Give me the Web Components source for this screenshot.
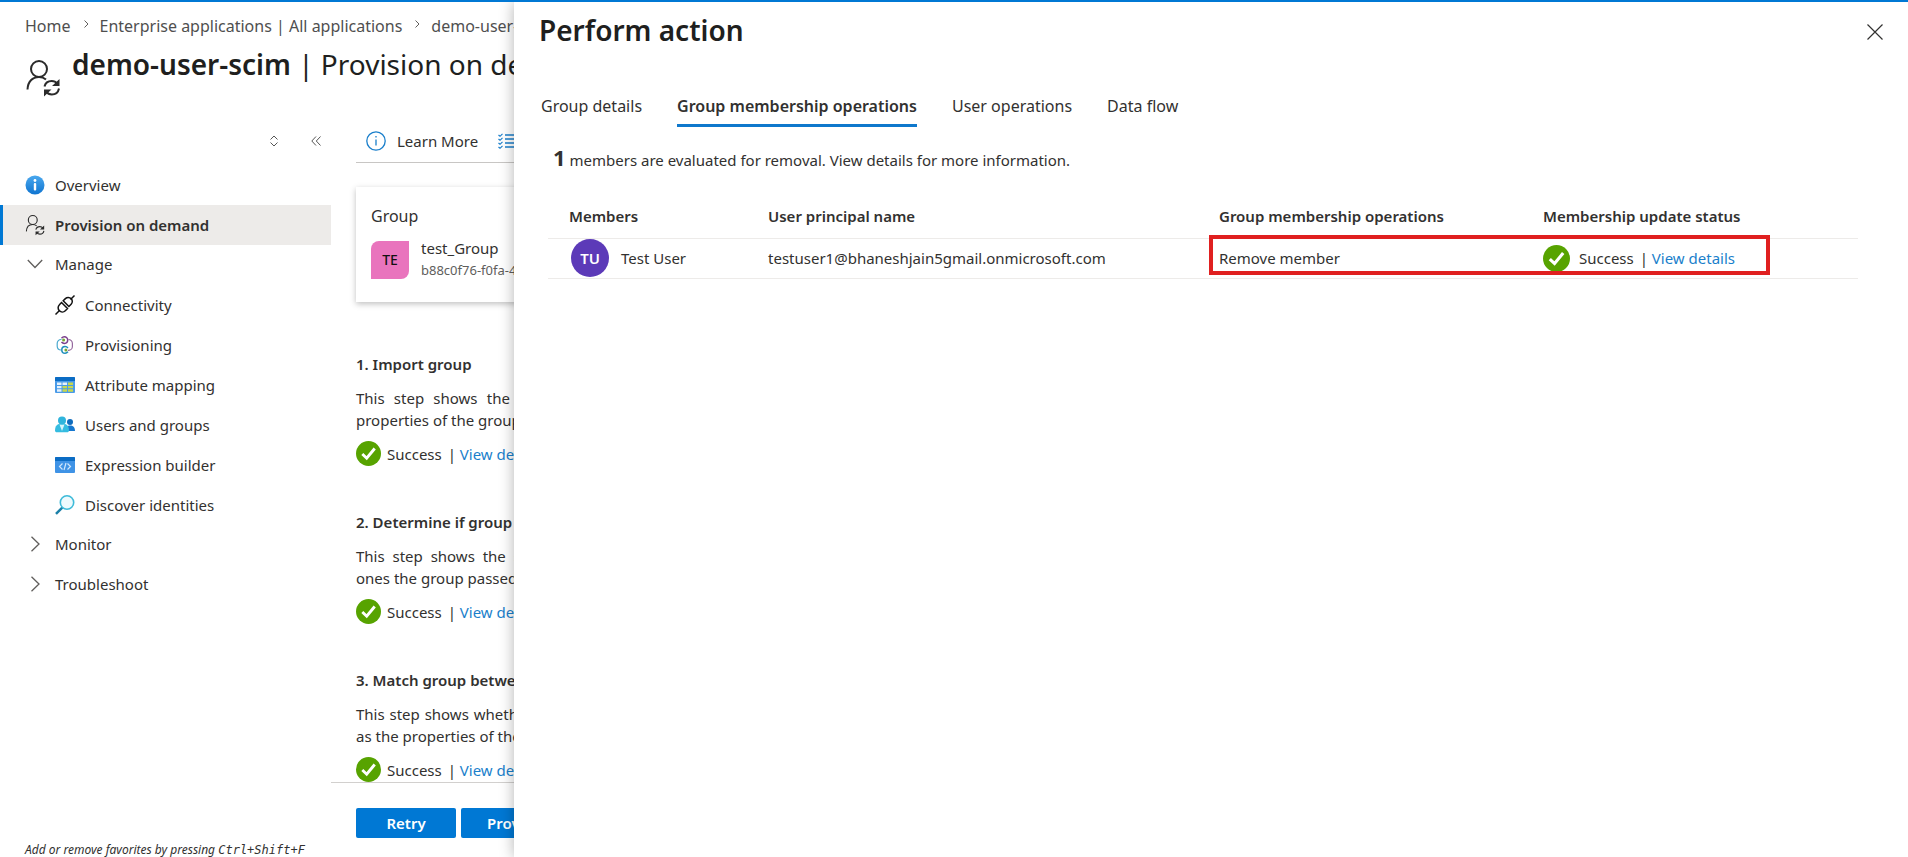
<!DOCTYPE html>
<html lang="en">
<head>
<meta charset="utf-8">
<title>Perform action</title>
<style>
    html, body {
        height: 100%;
        margin: 0;
    }

    body {
        font-family: "Noto Sans", "Open Sans", sans-serif;
        font-size: 15px;
        line-height: 22px;
        color: #323130;
        background: #fff;
        overflow: hidden;
    }
</style>
</head>
<body>
<portal-app></portal-app>

<script>
const ICONS = {
    person: `<svg viewBox="0 0 34 36" fill="none" stroke="#2b2b2b" stroke-width="2">
        <circle cx="13" cy="9" r="8"/>
        <path d="M1.500 29.500c.3-8 5-12.500 11.500-12.500 3 0 5 .8 7 2.500"/>
        <path d="M18.500 26.500c.8-3.500 3.800-5.500 7.200-5.500 2.400 0 4.300 1 5.500 2.600M33 28.500c-.8 3.800-3.800 6-7.200 6-2.400 0-4.300-1-5.600-2.800"/>
        <path d="M33.500 19v7h-7.500zM18 36.500v-7h7.500z" fill="#2b2b2b" stroke="none"/></svg>`,
    info: `<svg viewBox="0 0 20 20"><defs><linearGradient id="g" x1="0" y1="0" x2="0" y2="1"><stop offset="0" stop-color="#4aa8ee"/><stop offset="1" stop-color="#0f74d0"/></linearGradient></defs>
        <circle cx="10" cy="10" r="9.500" fill="url(#g)"/><circle cx="10" cy="5.500" r="1.400" fill="#fff"/><rect x="8.800" y="8" width="2.400" height="7.500" rx="1" fill="#fff"/></svg>`,
    infoLine: `<svg viewBox="0 0 20 20" fill="none" stroke="#1a7fcb" stroke-width="1.300"><circle cx="10" cy="10" r="9.200"/><path d="M10 8.500v6"/><path d="M10 5v1.600"/></svg>`,
    checklist: `<svg viewBox="0 0 20 16" fill="none" stroke="#1a7fcb" stroke-width="1.200"><path d="M7 2h13M7 6h13M7 10h13M7 14h13" stroke-width="1.600"/><path d="M.5 2l1.500 1.300L4.500.8M.5 6l1.500 1.300L4.500 4.800M.5 10l1.500 1.300L4.500 8.800M.5 14l1.500 1.300 2.500-2.500"/></svg>`,
    chevronDown: `<svg viewBox="0 0 16 16" fill="none" stroke="#605e5c" stroke-width="1.300"><path d="M.8 4l7.200 7.500L15.200 4"/></svg>`,
    chevronRight: `<svg viewBox="0 0 16 16" fill="none" stroke="#605e5c" stroke-width="1.300"><path d="M4.500.8L12 8l-7.500 7.200"/></svg>`,
    crumb: `<svg viewBox="0 0 8 8" fill="none" stroke="#605e5c"><path d="M2.500.5L6 4 2.500 7.500"/></svg>`,
    collapse: `<svg viewBox="0 0 10 10" fill="none" stroke="#555"><path d="M5 .5L.8 5 5 9.500M9.500.5L5.300 5l4.200 4.500"/></svg>`,
    sort: `<svg viewBox="0 0 10 12" fill="none" stroke="#555"><path d="M1.500 4.500L5 1l3.500 3.500M1.500 7.500L5 11l3.500-3.500"/></svg>`,
    plug: `<svg viewBox="0 0 20 20" fill="none" stroke="#111" stroke-width="1.500"><path d="M.5 19.500l4-4M15.500 4.500l4-4"/><path d="M6.500 7.500l6 6-2.200 2.200c-1.700 1.700-4.300 1.700-5.900.1-1.700-1.700-1.700-4.300 0-6zM8.200 5.800l2.200-2.200c1.700-1.700 4.200-1.500 5.700 0s1.700 4 0 5.700l-2.200 2.200z"/></svg>`,
    cycle: `<svg viewBox="0 0 20 20" fill="none" stroke-width="1.200"><path d="M6.500 4.500H6A3.800 3.800 0 0 0 2.200 8.300v3A3.800 3.800 0 0 0 6 15" stroke="#4aa9cf"/><path d="M13.500 4.500a3.900 3.900 0 0 1 3.900 3.900v3a3.900 3.900 0 0 1-3.900 3.900H13" stroke="#96699f"/><path d="M6.500 3.200C7.300 2.300 8.200 1.800 9.400 1.800a3.300 3.300 0 0 1 0 6.600c-1.200 0-2.100-.4-2.900-1.300" stroke="#7a3f8c" stroke-width="1.500"/><path d="M13 12.900c-.8-.9-1.700-1.300-2.900-1.300a3.300 3.300 0 0 0 0 6.600c1.200 0 2.100-.5 2.900-1.400" stroke="#1f8fbc" stroke-width="1.500"/><circle cx="8.600" cy="5.100" r="1.500" fill="#78a832"/><circle cx="10.900" cy="14.900" r="1.500" fill="#78a832"/></svg>`,
    table: `<svg viewBox="0 0 20 20"><rect y="2" width="20" height="16" rx="1" fill="#4a9be8"/><path d="M0 3a1 1 0 0 1 1-1h18a1 1 0 0 1 1 1v3H0z" fill="#0b6cc4"/><g fill="#e6f2fc"><path d="M2 7.500h4.500v2.400H2zM2 10.900h4.500v2.400H2zM2 14.300h4.500v2.400H2zM7.500 7.500H12v2.400H7.500z"/></g><path d="M13 7.500h5v2.400h-5zM7.500 10.900H12v2.400H7.500zM13 10.900h5v2.400h-5zM7.500 14.300H12v2.400H7.500zM13 14.300h5v2.400h-5z" fill="#c8d84c"/></svg>`,
    users: `<svg viewBox="0 0 20 20"><circle cx="15" cy="7" r="3" fill="#0f6cbd"/><path d="M10.500 15.500c0-3.500 2-5 4.700-5s4.800 1.700 4.800 5.500H11z" fill="#1577cf"/><path d="M0 15.500C0 11 2.300 8.500 7 8.500s7 2.500 7 7c0 1-.8 1.800-1.800 1.800H1.800C.8 17.300 0 16.500 0 15.500z" fill="#35bce0"/><path d="M4.500 9.500L7 16l2.500-6.500z" fill="#d6f4fb"/><circle cx="7" cy="5.500" r="4" fill="#2fb4dc"/></svg>`,
    code: `<svg viewBox="0 0 20 20"><rect y="2" width="20" height="16" rx="1" fill="#3f93e6"/><path d="M0 3a1 1 0 0 1 1-1h18a1 1 0 0 1 1 1v3H0z" fill="#0b6cc4"/><path d="M7.500 8.500L4.500 11.500l3 3M12.500 8.500l3 3-3 3M11 8l-2 7" fill="none" stroke="#cfe6fb" stroke-width="1.200"/></svg>`,
    search: `<svg viewBox="0 0 20 20" fill="none"><path d="M1 18.800l6.500-6.500" stroke="#1b7fa8" stroke-width="2.400"/><circle cx="12" cy="7.500" r="6.700" fill="#eefafd" stroke="#3fbbd9" stroke-width="1.600"/></svg>`,
    check: `<svg viewBox="0 0 25 25"><circle cx="12.500" cy="12.500" r="12.500" fill="#57a300"/><path d="M6.300 13l4.400 4.200 8-9.700" fill="none" stroke="#fff" stroke-width="2.900"/></svg>`,
    close: `<svg viewBox="0 0 16 16" fill="none" stroke="#323130" stroke-width="1.200"><path d="M.5.5l15 15M15.500.5l-15 15"/></svg>`
};

class PortalIcon extends HTMLElement {
    connectedCallback() {
        this.attachShadow({ mode: 'open' });
        this.shadowRoot.innerHTML = `
            <style>
                :host { display: block; flex: none; width: 20px; height: 20px; }
                svg { display: block; width: 100%; height: 100%; overflow: visible; }
            </style>
            ${ICONS[this.getAttribute('name')]}
        `;
    }
}

class PageHeader extends HTMLElement {
    connectedCallback() {
        this.attachShadow({ mode: 'open' });
        this.shadowRoot.innerHTML = `
            <style>
                :host { display: block; padding: 12px 0 0 25px; white-space: nowrap; }
                nav { display: flex; align-items: center; height: 24px; font-size: 16px; }
                nav a { color: #4f4f4f; text-decoration: none; }
                nav portal-icon { width: 8px; height: 8px; margin: 0 10px 4px 11px; }
                .title { display: flex; gap: 12px; padding: 6px 0 0 1px; }
                .title portal-icon { width: 34px; height: 36px; margin-top: 16px; }
                h1 { margin: 0; font-size: 28px; line-height: 40px; font-weight: 400; color: #201f1e; }
                b { font-weight: 600; }
            </style>
            <nav aria-label="Breadcrumb">
                <a href="#">Home</a><portal-icon name="crumb"></portal-icon>
                <a href="#">Enterprise applications | All applications</a><portal-icon name="crumb"></portal-icon>
                <a href="#">demo-user-scim</a>
            </nav>
            <div class="title">
                <portal-icon name="person"></portal-icon>
                <h1><b>demo-user-scim</b> | Provision on demand</h1>
            </div>
        `;
    }
}

class NavItem extends HTMLElement {
    connectedCallback() {
        this.attachShadow({ mode: 'open' });
        this.shadowRoot.innerHTML = `
            <style>
                :host { display: block; }
                a {
                    display: flex;
                    align-items: center;
                    gap: 10px;
                    height: 40px;
                    padding-left: 25px;
                    color: inherit;
                    text-decoration: none;
                }
                :host([group]) a { height: 38px; padding-bottom: 2px; }
                :host([group]) portal-icon { width: 16px; height: 16px; margin: 0 2px; }
                :host([child]) a { padding-left: 55px; }
                :host([selected]) a {
                    padding-left: 22px;
                    border-left: 3px solid #0078d4;
                    background: #edebe9;
                    font-weight: 600;
                }
            </style>
            <a href="#"><portal-icon name="${this.getAttribute('icon')}"></portal-icon><slot></slot></a>
        `;
    }
}

class SideNav extends HTMLElement {
    connectedCallback() {
        this.attachShadow({ mode: 'open' });
        this.shadowRoot.innerHTML = `
            <style>
                :host { display: flex; flex-direction: column; min-height: 0; }
                .tools {
                    display: flex;
                    justify-content: flex-end;
                    align-items: center;
                    gap: 32px;
                    height: 24px;
                    padding-right: 10px;
                    margin: 31px 0 12px;
                }
                button { padding: 0; border: 0; background: none; }
                .tools portal-icon { width: 10px; height: 12px; }
                nav { flex: 1; }
                footer {
                    padding-left: 25px;
                    font-size: 12px;
                    line-height: 14px;
                    font-style: italic;
                    white-space: nowrap;
                }
                kbd { font-family: "DejaVu Sans Mono", monospace; font-size: 12px; }
            </style>
            <div class="tools">
                <button aria-label="Expand all"><portal-icon name="sort"></portal-icon></button>
                <button aria-label="Collapse menu"><portal-icon name="collapse"></portal-icon></button>
            </div>
            <nav aria-label="Application">
                <nav-item icon="info">Overview</nav-item>
                <nav-item icon="person" selected>Provision on demand</nav-item>
                <nav-item icon="chevronDown" group>Manage</nav-item>
                <nav-item icon="plug" child>Connectivity</nav-item>
                <nav-item icon="cycle" child>Provisioning</nav-item>
                <nav-item icon="table" child>Attribute mapping</nav-item>
                <nav-item icon="users" child>Users and groups</nav-item>
                <nav-item icon="code" child>Expression builder</nav-item>
                <nav-item icon="search" child>Discover identities</nav-item>
                <nav-item icon="chevronRight" group>Monitor</nav-item>
                <nav-item icon="chevronRight" group>Troubleshoot</nav-item>
            </nav>
            <footer>Add or remove favorites by pressing <kbd>Ctrl+Shift+F</kbd></footer>
        `;
    }
}

class StatusLine extends HTMLElement {
    connectedCallback() {
        this.attachShadow({ mode: 'open' });
        this.shadowRoot.innerHTML = `
            <style>
                :host { display: flex; align-items: center; gap: 6px; white-space: nowrap; }
                :host([large]) { gap: 9px; }
                portal-icon { width: 25px; height: 25px; }
                :host([large]) portal-icon { width: 27px; height: 27px; }
                .sep { padding-left: 2px; }
                a { color: #1a7fcb; text-decoration: none; }
            </style>
            <portal-icon name="check"></portal-icon>
            <span><slot></slot> <span class="sep">|</span> <a href="#">View details</a></span>
        `;
    }
}

class ProvisionStep extends HTMLElement {
    connectedCallback() {
        this.attachShadow({ mode: 'open' });
        this.shadowRoot.innerHTML = `
            <style>
                :host { display: block; width: 290px; height: 158px; }
                h2 {
                    margin: 0 0 12px;
                    font-size: 15px;
                    line-height: 22px;
                    font-weight: 600;
                    white-space: nowrap;
                }
                p { margin: 0 0 10px; text-align: justify; }
            </style>
            <h2>${this.getAttribute('heading')}</h2>
            <p><slot></slot></p>
            <status-line>Success</status-line>
        `;
    }
}

class GroupCard extends HTMLElement {
    connectedCallback() {
        this.attachShadow({ mode: 'open' });
        this.shadowRoot.innerHTML = `
            <style>
                :host {
                    display: block;
                    box-sizing: border-box;
                    width: 380px;
                    height: 115px;
                    padding: 17px 15px;
                    box-shadow: 0 2px 6px rgba(0, 0, 0, .25);
                }
                h2 { margin: 0; font-size: 16px; line-height: 24px; font-weight: 400; }
                .row { display: flex; gap: 12px; margin-top: 9px; }
                .avatar {
                    width: 38px;
                    height: 38px;
                    border-radius: 8px 0;
                    background: #e974bd;
                    color: #111;
                    font-weight: 500;
                    font-size: 14px;
                    line-height: 38px;
                    text-align: center;
                    margin-top: 4px;
                }
                small { display: block; font-size: 13px; color: #605e5c; }
            </style>
            <h2>Group</h2>
            <div class="row">
                <div class="avatar">TE</div>
                <div>test_Group<small>b88c0f76-f0fa-4c1e</small></div>
            </div>
        `;
    }
}

class ProvisionView extends HTMLElement {
    connectedCallback() {
        this.attachShadow({ mode: 'open' });
        this.shadowRoot.innerHTML = `
            <style>
                :host { display: flex; flex-direction: column; min-height: 0; }
                .commands {
                    display: flex;
                    align-items: center;
                    gap: 20px;
                    height: 42px;
                    margin: 22px 0 0 25px;
                    border-bottom: 1px solid #c8c6c4;
                }
                button { font: inherit; color: inherit; border: 0; background: none; padding: 0; }
                .commands button { display: flex; align-items: center; gap: 11px; }
                .commands button:first-child { padding-left: 10px; }
                .body { flex: 1; min-height: 0; overflow: hidden; padding: 24px 0 0 25px; }
                .steps { margin-top: 51px; }
                .actions {
                    display: flex;
                    gap: 5px;
                    height: 49px;
                    padding: 25px 0 0 25px;
                    border-top: 1px solid #d2d0ce;
                }
                .actions button {
                    min-width: 100px;
                    height: 30px;
                    padding: 0 26px;
                    border-radius: 2px;
                    background: #0078d4;
                    color: #fff;
                    font-weight: 600;
                }
            </style>
            <div class="commands">
                <button><portal-icon name="infoLine"></portal-icon>Learn More</button>
                <button aria-label="Steps"><portal-icon name="checklist"></portal-icon></button>
            </div>
            <div class="body">
                <group-card></group-card>
                <div class="steps">
                    <provision-step heading="1. Import group">This step shows the retrieved objects, properties of the group</provision-step>
                    <provision-step heading="2. Determine if group is in scope">This step shows the scopes and which ones the group passed</provision-step>
                    <provision-step heading="3. Match group between source and target">This step shows whether the group is in, as the properties of the match</provision-step>
                </div>
            </div>
            <div class="actions">
                <button>Retry</button>
                <button>Provision another object</button>
            </div>
        `;
    }
}

class TabList extends HTMLElement {
    connectedCallback() {
        this.attachShadow({ mode: 'open' });
        this.shadowRoot.innerHTML = `
            <style>
                :host { display: flex; gap: 35px; }
                button {
                    height: 44px;
                    padding: 4px 0 0;
                    border: 0;
                    border-bottom: 3px solid transparent;
                    background: none;
                    color: inherit;
                    font: inherit;
                    font-size: 16px;
                }
                button[aria-selected="true"] { font-weight: 600; border-color: #0f78cc; }
            </style>
            <button role="tab" aria-selected="false">Group details</button>
            <button role="tab" aria-selected="true">Group membership operations</button>
            <button role="tab" aria-selected="false">User operations</button>
            <button role="tab" aria-selected="false">Data flow</button>
        `;
    }
}

class MemberTable extends HTMLElement {
    connectedCallback() {
        this.attachShadow({ mode: 'open' });
        this.shadowRoot.innerHTML = `
            <style>
                :host { display: block; }
                table { width: 100%; table-layout: fixed; border-collapse: collapse; }
                .c1 { width: 210px; }
                .c2 { width: 451px; }
                .c3 { width: 324px; }
                th, td {
                    box-sizing: border-box;
                    height: 40px;
                    padding: 0 0 0 10px;
                    border-bottom: 1px solid #edebe9;
                    text-align: left;
                    white-space: nowrap;
                }
                th { height: 44px; font-weight: 600; }
                th:first-child, td:first-child { padding-left: 21px; }
                .member { display: flex; align-items: center; gap: 12px; padding-left: 2px; }
                .avatar {
                    width: 38px;
                    height: 38px;
                    border-radius: 50%;
                    background: #5c3ab8;
                    color: #fff;
                    font-weight: 600;
                    line-height: 38px;
                    text-align: center;
                }
                /* outline drawn over the operation and status cells */
                .marked { position: relative; }
                .marked::after {
                    content: "";
                    position: absolute;
                    z-index: 1;
                    top: -4px;
                    left: 0;
                    box-sizing: border-box;
                    width: 561px;
                    height: 40px;
                    border: 4px solid #e02020;
                }
            </style>
            <table>
                <colgroup><col class="c1"><col class="c2"><col class="c3"><col></colgroup>
                <thead>
                    <tr>
                        <th>Members</th>
                        <th>User principal name</th>
                        <th>Group membership operations</th>
                        <th>Membership update status</th>
                    </tr>
                </thead>
                <tbody>
                    <tr>
                        <td><div class="member"><span class="avatar">TU</span>Test User</div></td>
                        <td>testuser1@bhaneshjain5gmail.onmicrosoft.com</td>
                        <td class="marked">Remove member</td>
                        <td><status-line large>Success</status-line></td>
                    </tr>
                </tbody>
            </table>
        `;
    }
}

class ContextPanel extends HTMLElement {
    connectedCallback() {
        this.attachShadow({ mode: 'open' });
        this.shadowRoot.innerHTML = `
            <style>
                :host {
                    display: block;
                    background: #fff;
                    box-shadow: 0 0 14px rgba(0, 0, 0, .3);
                }
                header { display: flex; justify-content: space-between; padding: 8px 25px 0 25px; }
                h1 { margin: 0; font-size: 28px; line-height: 40px; font-weight: 600; color: #201f1e; }
                header button { padding: 4px 0 0; border: 0; background: none; }
                header portal-icon { width: 16px; height: 16px; }
                tab-list { margin: 33px 0 0 27px; }
                p { margin: 14px 0 0 39px; line-height: 32px; }
                strong { font-size: 22px; font-weight: 700; }
                member-table { margin: 18px 50px 0 34px; }
            </style>
            <header>
                <h1>Perform action</h1>
                <button aria-label="Close"><portal-icon name="close"></portal-icon></button>
            </header>
            <tab-list role="tablist"></tab-list>
            <p><strong>1</strong> members are evaluated for removal. View details for more information.</p>
            <member-table></member-table>
        `;
    }
}

class PortalApp extends HTMLElement {
    connectedCallback() {
        this.attachShadow({ mode: 'open' });
        this.shadowRoot.innerHTML = `
            <style>
                :host {
                    position: relative;
                    display: grid;
                    grid-template: 96px 1fr / 331px 1fr;
                    box-sizing: border-box;
                    height: 100vh;
                    border-top: 2px solid #0078d4;
                    overflow: hidden;
                }
                page-header { grid-column: 1 / -1; }
                context-panel { position: absolute; top: 0; right: 0; bottom: 0; left: 514px; }
            </style>
            <page-header></page-header>
            <side-nav></side-nav>
            <provision-view></provision-view>
            <context-panel></context-panel>
        `;
    }
}

customElements.define('portal-icon', PortalIcon);
customElements.define('page-header', PageHeader);
customElements.define('nav-item', NavItem);
customElements.define('side-nav', SideNav);
customElements.define('status-line', StatusLine);
customElements.define('provision-step', ProvisionStep);
customElements.define('group-card', GroupCard);
customElements.define('provision-view', ProvisionView);
customElements.define('tab-list', TabList);
customElements.define('member-table', MemberTable);
customElements.define('context-panel', ContextPanel);
customElements.define('portal-app', PortalApp);
</script>
</body>
</html>
